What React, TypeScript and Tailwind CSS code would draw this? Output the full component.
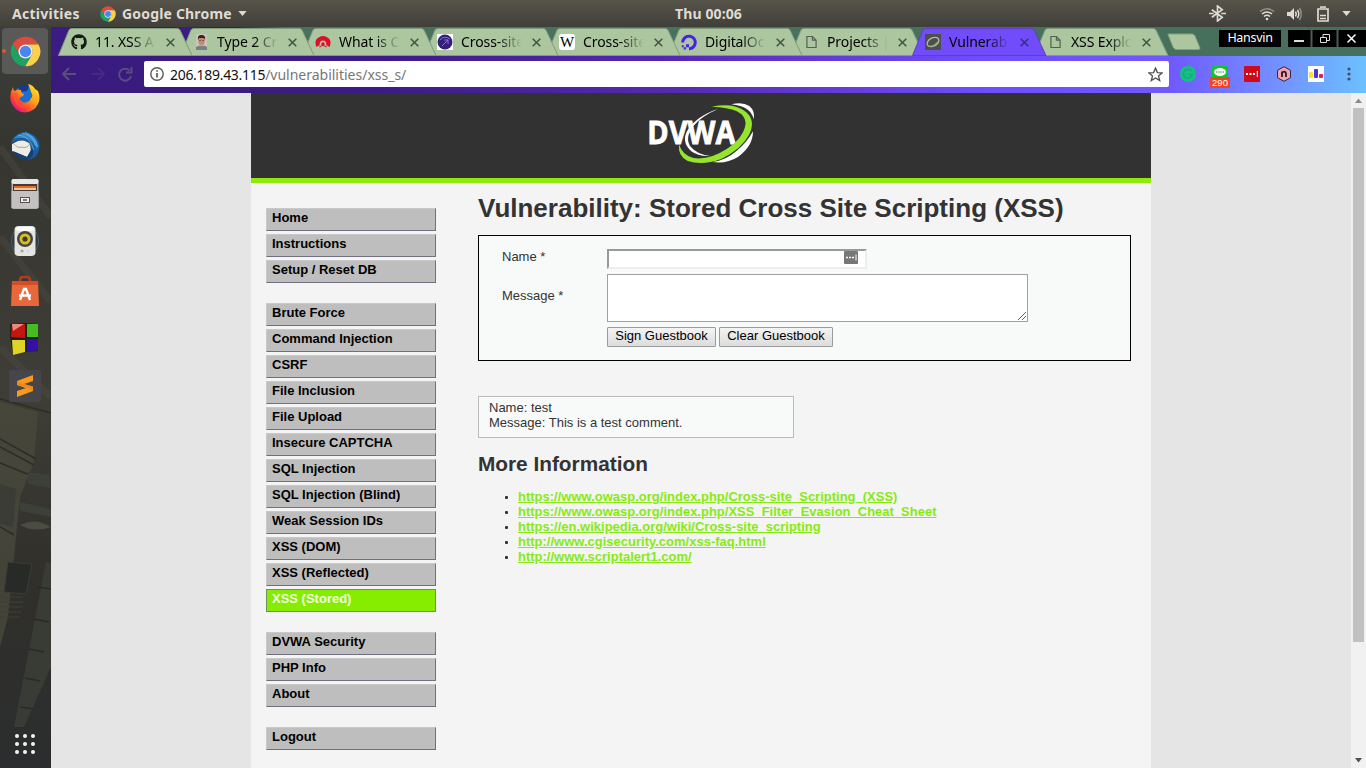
import type { ReactNode } from "react";
import { FaGithub, FaDigitalOcean } from "react-icons/fa";

function ChromeIcon({ className }: { className: string }) {
  return (
    <svg viewBox="0 0 48 48" className={className}>
      <path fill="#dd4b3e" d="M24 13L44.2 13A23 23 0 0 0 4.4 12L14.5 29.5A11 11 0 0 1 24 13Z" />
      <path fill="#fbd04b" d="M44.2 13H24A11 11 0 0 1 33.5 29.5L23.4 47A23 23 0 0 0 44.2 13Z" />
      <path fill="#1da261" d="M4.4 12L14.5 29.5A11 11 0 0 0 33.5 29.5L23.4 47A23 23 0 0 1 4.4 12Z" />
      <circle cx="24" cy="24" r="11" fill="#f3f3f3" />
      <circle cx="24" cy="24" r="8.8" fill="#4a86ee" />
    </svg>
  );
}

function FirefoxIcon() {
  return (
    <svg viewBox="0 0 30 30" className="size-[30px]">
      <defs>
        <linearGradient id="fx" x1="0.9" y1="0.1" x2="0.2" y2="0.9">
          <stop offset="0" stopColor="#ffe226" />
          <stop offset="0.45" stopColor="#ff9a1a" />
          <stop offset="0.8" stopColor="#ff3a3a" />
          <stop offset="1" stopColor="#e0188a" />
        </linearGradient>
      </defs>
      <circle cx="15" cy="14" r="11.5" fill="#1a6fd0" />
      <path d="M8 4Q14 0 19 3L17 8L10 9Z" fill="#17398f" />
      <path
        fill="url(#fx)"
        d="M3 4Q3 7 5 8Q8 6 11 7Q11 10 14 11Q14 13 11 14Q9 15 10 17Q13 21 17 19Q21 18 20 16Q24 14 21 9Q20 5 18 1Q23 2 25 6L28 8Q31 15 28 21Q24 29 15 29.500Q5 29 1 19Q-1 11 3 4Z"
      />
      <path d="M5 9Q2 16 6 21Q11 27 19 24Q12 25 8 19Q6 14 8 11Z" fill="#ff5722" opacity=".75" />
    </svg>
  );
}

function ThunderbirdIcon() {
  return (
    <svg viewBox="0 0 30 30" className="size-[30px]">
      <path d="M1 12Q4 2 15 1Q25 2 29 11Q31 20 25 26Q19 30 13 28Q24 22 19 11Q12 7 1 12Z" fill="#185e9e" />
      <path d="M3 8Q12 -1 23 5Q29 11 27 19Q24 9 15 7Q8 6 3 8Z" fill="#3487c8" />
      <path d="M12 2Q23 4 26 15M8 4Q20 5 24 19M15 1Q25 6 28 16" stroke="#77bdea" strokeWidth=".7" fill="none" />
      <path d="M2 13L8 10Q15 8 20 13L21 21L17 26L2 20Z" fill="#eeece7" />
      <path d="M3 12Q8 18 12 16Q16 18 20 13" stroke="#aaa69f" fill="none" />
      <path d="M3 20L17 26L22 17Q26 24 18 29Q8 30 3 20Z" fill="#163f76" />
    </svg>
  );
}

function FilesIcon() {
  return (
    <svg viewBox="0 0 30 32" className="h-[32px] w-[30px]">
      <rect x="1.500" y="1" width="27" height="30" rx="2" fill="#b4b4b2" />
      <rect x="1.500" y="1" width="27" height="5" rx="2" fill="#e7e6e4" />
      <rect x="3" y="6" width="24" height="7" fill="#463a33" />
      <rect x="4" y="8" width="22" height="2" fill="#e66b29" />
      <rect x="4" y="10" width="22" height="2" fill="#f3c69c" />
      <rect x="1.500" y="13" width="27" height="17" fill="#c3c2c0" />
      <rect x="10.500" y="19.500" width="9" height="5" fill="#eee" stroke="#555" />
      <path d="M13 22H17" stroke="#555" strokeWidth="1.500" />
    </svg>
  );
}

function RhythmboxIcon() {
  return (
    <svg viewBox="0 0 30 32" className="h-[32px] w-[30px]">
      <path d="M4 7Q-1 16 4 25M26 7Q31 16 26 25" stroke="#35637c" fill="none" />
      <rect x="4.500" y="1" width="21" height="30" rx="4" fill="#e4e4e2" />
      <rect x="6" y="2" width="18" height="4" rx="2" fill="#fafafa" />
      <circle cx="15" cy="14" r="8" fill="#44463c" />
      <circle cx="15" cy="14" r="5.500" fill="#d7bd27" />
      <circle cx="15" cy="14" r="2.600" fill="#3c3a2c" />
      <circle cx="12" cy="26" r="1.600" fill="#a6a6a6" />
      <circle cx="18" cy="26" r="1.600" fill="#d7d7d7" />
    </svg>
  );
}

function SoftwareIcon() {
  return (
    <svg viewBox="0 0 30 32" className="h-[32px] w-[30px]">
      <path d="M10 8V5Q10 2 13 2H17Q20 2 20 5V8" fill="none" stroke="#b53a1c" strokeWidth="2.500" />
      <path d="M2 6H28L29 31H1Z" fill="#e9683b" />
      <path d="M2 6H28L28.200 10H1.800Z" fill="#d44e25" />
      <path d="M10 25L14 14H16L20 25M9 20.500H21" fill="none" stroke="#fff" strokeWidth="2.300" />
    </svg>
  );
}

function BlocksIcon() {
  return (
    <svg viewBox="0 0 30 34" className="h-[34px] w-[30px]">
      <path d="M0 3L15 2L28 3V30L17 31L3 34L0 16Z" fill="#202020" />
      <path d="M2 3L15 3V17L1 16Z" fill="#c3160f" />
      <path d="M2 3H14L3 10Z" fill="#ed8a80" />
      <path d="M17 3L28 3V16H17Z" fill="#43bd20" />
      <path d="M2 19H15V31L3 34Z" fill="#ded326" />
      <path d="M17 18H28V29L17 31Z" fill="#3310a6" />
    </svg>
  );
}

function Dock() {
  return (
    <aside className="relative flex h-full w-[51px] shrink-0 flex-col items-center overflow-hidden bg-[#35342f] pr-px">
      <svg viewBox="0 0 51 741" className="absolute inset-0 h-full w-full">
        <defs>
          <linearGradient id="dock" x1="0" y1="0" x2="0" y2="1">
            <stop offset="0" stopColor="#3a3f3b" />
            <stop offset=".15" stopColor="#363631" />
            <stop offset=".5" stopColor="#3e3d36" />
            <stop offset=".75" stopColor="#302f2b" />
            <stop offset="1" stopColor="#2b2d2e" />
          </linearGradient>
        </defs>
        <rect width="51" height="741" fill="url(#dock)" />
        <path d="M0 120L51 190M0 210L51 275M0 320L51 370" stroke="#484740" strokeWidth="7" opacity=".5" />
        <path d="M0 375L38 385L34 435L20 470L8 590L0 620Z" fill="#48483c" opacity=".8" />
        <path d="M0 412L36 432M0 420L34 438M0 436L30 448M0 372L51 386M0 500L14 508" stroke="#2b2e28" strokeWidth="1.500" />
        <path d="M0 457L16 462L13 500L0 497Z" fill="#3a3c35" />
        <path d="M28 445L50 448V461L28 457Z M20 475L51 482V490L20 484Z" fill="#3d3f3a" />
        <path d="M20 498Q35 490 51 500Q35 506 20 498Z" fill="#55574f" opacity=".7" />
        <path d="M8 535L32 537L26 567L4 565Z" fill="#282a27" stroke="#3b3c37" />
        <path d="M0 570H23M0 575H23M0 580H22M0 585H21M0 590H20" stroke="#41413a" />
        <path d="M46 535L51 536V640L24 700H14Z" fill="#3c3e38" opacity=".8" />
        <path d="M38 560L51 562M34 592L49 595M29 622L44 625M25 651L40 654M20 680L34 682" stroke="#292a27" strokeWidth="1.500" />
      </svg>
      <div className="relative mt-px flex h-[46px] w-[46px] items-center justify-center rounded bg-[#595a58]">
        <ChromeIcon className="size-[31px]" />
        <span className="absolute -left-[0px] top-[21px] size-1 rounded-full bg-[#e85125]" />
      </div>
      <div className="relative mt-[9px] flex flex-col items-center">
        <FirefoxIcon />
        <div className="mt-[18px]"><ThunderbirdIcon /></div>
        <div className="mt-[17px]"><FilesIcon /></div>
        <div className="mt-[15px]"><RhythmboxIcon /></div>
        <div className="mt-[18px]"><SoftwareIcon /></div>
        <div className="mt-[14px]"><BlocksIcon /></div>
        <div className="mt-[15px] flex size-8 items-center justify-center rounded-[2px] bg-[#46464a]">
          <svg viewBox="0 0 18 22" className="h-[22px] w-[18px]">
            <path d="M1 6L17 0V6L8 9L17 12V16L1 22V16L10 13L1 10Z" fill="#f99a1c" />
            <path d="M1 6V10L10 13L17 15.500V11.500L8 9Z" fill="#ee8b1a" />
          </svg>
        </div>
      </div>
      <div className="relative mb-[14px] mt-auto grid grid-cols-3 gap-1">
        {Array.from({ length: 9 }, (_, i) => (
          <span key={i} className="size-1 rounded-full bg-[#f4f4f4]" />
        ))}
      </div>
    </aside>
  );
}

function TopBar() {
  return (
    <header className="grid h-[27px] shrink-0 grid-cols-[1fr_auto_1fr] items-center bg-linear-to-b from-[#57544a] to-[#403f3a] font-['Noto_Sans',sans-serif] text-[14px] font-bold text-[#dfdbd2]">
      <div className="flex items-center pl-3">
        <span className="w-[68px] tracking-[0.27px]">Activities</span>
        <ChromeIcon className="ml-5 size-4" />
        <span className="ml-[6px] tracking-[0.18px]">Google Chrome</span>
        <svg viewBox="0 0 10 6" className="ml-[6px] h-[5px] w-[9px]"><path d="M0 0H10L5 6Z" fill="currentColor" /></svg>
      </div>
      <span className="pl-[51px] tracking-[0.1px]">Thu 00:06</span>
      <div className="flex items-center justify-end pr-[15px]">
        <svg viewBox="0 0 18 18" className="mr-[33px] size-[17px]" fill="none" stroke="currentColor" strokeWidth="1.800">
          <path d="M3 5L14 13L9 17V1L14 5L3 13M0 9H5M13 9H18" />
        </svg>
        <svg viewBox="0 0 16 14" className="mr-[12px] h-[14px] w-4" fill="none" stroke="currentColor" strokeWidth="1.600">
          <path d="M1 4.500Q8 -1 15 4.500" opacity=".45" />
          <path d="M3 7Q8 3 13 7M5 9.500Q8 7 11 9.500" />
          <circle cx="8" cy="12" r="1.300" fill="currentColor" stroke="none" />
        </svg>
        <svg viewBox="0 0 16 14" className="mr-[14px] h-[14px] w-4" fill="none" stroke="currentColor" strokeWidth="1.500">
          <path d="M0 5H3L7 1V13L3 9H0Z" fill="currentColor" stroke="none" />
          <path d="M8.500 4.500Q10 7 8.500 9.500M10.500 3Q13 7 10.500 11" />
          <path d="M12.500 1Q16 7 12.500 13" opacity=".45" />
        </svg>
        <svg viewBox="0 0 12 16" className="mr-[13px] h-4 w-3" fill="none" stroke="currentColor" strokeWidth="1.700">
          <path d="M4 2V1H8V2M1 3H11V15H1ZM3 9.500H9M3 12.500H9" />
        </svg>
        <svg viewBox="0 0 10 6" className="h-[5px] w-[9px]"><path d="M0 0H10L5 6Z" fill="currentColor" /></svg>
      </div>
    </header>
  );
}

const PageIcon = () => (
  <svg viewBox="0 0 12 14" className="ml-[3px] h-[14px] w-[11px]" fill="none" stroke="#555f50" strokeWidth="1.300">
    <path d="M1 1H7L11 5V13H1ZM7 1V5H11" />
  </svg>
);

type TabInfo = { title: string; icon: ReactNode; z: string; active?: boolean };

const tabs: TabInfo[] = [
  { title: "11. XSS At", z: "z-[9]", icon: <FaGithub className="size-4 text-[#161c16]" /> },
  {
    title: "Type 2 Cro", z: "z-[8]",
    icon: (
      <svg viewBox="0 0 11 16" className="ml-[3px] h-4 w-[11px]">
        <rect width="11" height="16" fill="#c9c4bc" />
        <path d="M0 16V13Q3 11 5.500 12Q9 11 11 13V16Z" fill="#77808a" />
        <ellipse cx="5.500" cy="7" rx="3.200" ry="4.500" fill="#c08c74" />
        <path d="M2 6Q1 1 5.500 1Q10 1 9 6L8 4H3Z" fill="#33241e" />
        <path d="M3 6.500H5M6 6.500H8" stroke="#6d4a3c" strokeWidth=".8" />
      </svg>
    ),
  },
  {
    title: "What is C", z: "z-[7]",
    icon: (
      <svg viewBox="0 0 16 14" className="h-[14px] w-4">
        <path d="M1.500 12Q-1.500 5 4 2.200Q8 0 12 2.200Q17.500 5 14.500 12L11.200 10Q12 5.800 8 5.500Q4 5.800 4.800 10Z" fill="#db1029" />
        <circle cx="8" cy="9" r="1.700" fill="#db1029" />
        <path d="M4.500 12Q8 9 11.500 12" stroke="#db1029" strokeWidth="1.200" fill="none" />
      </svg>
    ),
  },
  {
    title: "Cross-site", z: "z-[6]",
    icon: (
      <svg viewBox="0 0 16 16" className="size-4">
        <rect width="16" height="16" fill="#fff" />
        <circle cx="8" cy="8" r="7.500" fill="#34207a" />
        <path d="M3 6Q7 1 13 5M5 12L11 6M7 6H11V10" stroke="#8577cc" fill="none" />
      </svg>
    ),
  },
  {
    title: "Cross-site", z: "z-[5]",
    icon: (
      <span className="flex size-4 items-center justify-center rounded-[3px] bg-white font-['Liberation_Serif',serif] text-[15px] leading-none text-black">W</span>
    ),
  },
  { title: "DigitalOc", z: "z-[4]", icon: <FaDigitalOcean className="size-[17px] text-[#4420e8]" /> },
  { title: "Projects |", z: "z-[3]", icon: <PageIcon /> },
  {
    title: "Vulnerab", z: "z-10", active: true,
    icon: (
      <svg viewBox="0 0 16 16" className="size-4">
        <rect width="16" height="16" fill="#4c4f4c" />
        <ellipse cx="8" cy="8" rx="6.300" ry="4" transform="rotate(-28 8 8)" fill="none" stroke="#b5b7ad" strokeWidth="1.400" />
        <path d="M2.500 11Q7 14 12 8" stroke="#7e9b54" fill="none" />
      </svg>
    ),
  },
  { title: "XSS Explo", z: "z-[1]", icon: <PageIcon /> },
];

function Tab({ tab }: { tab: TabInfo }) {
  return (
    <div className={`relative flex h-7 w-[122px] shrink-0 items-center ${tab.z}`}>
      <svg viewBox="0 0 135 28" className="absolute left-0 top-0 h-7 w-[135px]">
        <path
          d="M0.500 27.500L11 2Q12 0.500 14 0.500H119Q121 0.500 122 2L134 27.500Z"
          fill={tab.active ? "#704cfa" : "#acc69f"}
          stroke={tab.active ? "#5c40c4" : "#7f9c7b"}
          strokeWidth="1"
        />
      </svg>
      <div className="relative ml-[13px] flex w-4 justify-start">{tab.icon}</div>
      <span className="relative ml-[8px] w-[66px] overflow-hidden whitespace-nowrap text-[14px] leading-5 tracking-[-0.1px] text-black mask-r-from-55% mask-r-to-92%">
        {tab.title}
      </span>
      <svg viewBox="0 0 9 9" className="relative ml-[5px] size-[9px]" stroke={tab.active ? "#343078" : "#465142"} strokeWidth="1.500">
        <path d="M.7 .7L8.300 8.300M8.300 .7L.7 8.300" />
      </svg>
    </div>
  );
}

function TabStrip() {
  return (
    <div className="flex h-[29px] items-start bg-[linear-gradient(90deg,#3b1c83_0,#3b1c83_190px,#49725e_235px,#47705c_100%)] pl-[7px] pt-px font-['Noto_Sans',sans-serif]">
      {tabs.map((t, i) => <Tab key={i} tab={t} />)}
      <svg viewBox="0 0 34 18" className="ml-[11px] mt-[5px] h-[18px] w-[34px] shrink-0">
        <path d="M1 1.500Q1 1 2 1H25Q27 1 28 3L33 15Q33 16.500 31 16.500H9Q7 16 6 14Z" fill="#acc69f" stroke="#83a17d" />
      </svg>
      <div className="ml-auto flex h-[19px] shrink-0 items-center pt-[2px]">
        <span className="mr-[7px] flex h-[17px] w-[62px] items-center justify-center bg-black text-[12.500px] tracking-[-0.3px] text-white">Hansvin</span>
        <div className="flex h-[17px] w-[78px] bg-black">
          <svg viewBox="0 0 78 17" className="h-[17px] w-[78px]" fill="none" stroke="#fff">
            <path d="M6 11H16" strokeWidth="2" stroke="#ddd" />
            <path d="M32.500 7.500H38.500V12.500H32.500ZM35 7V4.500H41.500V10.500H39" stroke="#ddd" />
            <path d="M59.500 4.500L67.500 12.500M67.500 4.500L59.500 12.500" strokeWidth="1.500" />
            <path d="M23.500 0V17M49.500 0V17" stroke="#4a5d52" strokeWidth="2" />
          </svg>
        </div>
      </div>
    </div>
  );
}

function Toolbar() {
  return (
    <div className="flex h-[37px] items-center bg-[linear-gradient(90deg,#391a7c_0%,#3c1b88_25%,#5729b5_48%,#6f4cfa_70%,#7058ff_85%,#7388ff_92%,#6cc0ff_100%)] pb-px font-['Noto_Sans',sans-serif]">
      <svg viewBox="0 0 93 26" className="h-[26px] w-[93px] shrink-0" fill="none" strokeWidth="2">
        <path d="M25 13H12.500M18 7L12 13L18 19" stroke="#5b4c7e" />
        <path d="M41 13H53M47 7L53 13L47 19" stroke="#452a83" />
        <path d="M78.500 9.500A6 6 0 1 0 80 15M80.500 6V11.500H75" stroke="#5b4c7e" />
      </svg>
      <div className="flex h-[26px] w-[1025px] shrink-0 items-center rounded-[2px] bg-white pl-[6px] pr-[6px] text-[14px] text-[#111]">
        <svg viewBox="0 0 14 14" className="size-[14px]" fill="none" stroke="#5a5a5a" strokeWidth="1.400">
          <circle cx="7" cy="7" r="6.200" />
          <path d="M7 6V10.500M7 3.200V4.800" strokeWidth="1.700" />
        </svg>
        <span className="ml-[6px] tracking-[-0.3px]">206.189.43.115</span>
        <span className="tracking-[-0.01px] text-[#777]">/vulnerabilities/xss_s/</span>
        <svg viewBox="0 0 16 16" className="ml-auto size-[15px]" fill="none" stroke="#505050" strokeWidth="1.400">
          <path d="M8 1.200L10 6L15 6.300L11.200 9.500L12.500 14.500L8 11.700L3.500 14.500L4.800 9.500L1 6.300L6 6Z" />
        </svg>
      </div>
      <svg viewBox="0 0 16 16" className="ml-[11px] size-4 shrink-0">
        <circle cx="8" cy="8" r="8" fill="#12c37c" />
        <path d="M11.500 5A4.500 4.500 0 1 0 12 9.500V8.500H8.500" fill="none" stroke="#1aa58a" strokeWidth="1.500" />
      </svg>
      <div className="ml-[14px] flex w-5 shrink-0 flex-col items-center pt-[6px]">
        <svg viewBox="0 0 16 11" className="h-[11px] w-4">
          <path d="M0 2Q0 0 2 0H14Q16 0 16 2V11H0Z" fill="#12c42c" />
          <ellipse cx="8" cy="6" rx="6" ry="4" fill="#fff" />
          <path d="M4 6H12" stroke="#5ac965" strokeWidth="1.500" strokeDasharray="1.500 .7" />
        </svg>
        <span className="flex h-[11px] w-5 items-center justify-center rounded-[1px] bg-[#f54322] font-['Liberation_Sans',sans-serif] text-[9.500px] leading-none text-white">290</span>
      </div>
      <svg viewBox="0 0 16 16" className="ml-[14px] size-4 shrink-0">
        <rect width="16" height="16" rx="1" fill="#d0091b" />
        <path d="M2 8H4M5.500 8H7.500M9 8H11" stroke="#fff" strokeWidth="2" />
        <path d="M13.300 5V11" stroke="#fff" />
      </svg>
      <svg viewBox="0 0 16 16" className="ml-4 size-4 shrink-0">
        <path d="M8 .7L14.500 4.300V11.700L8 15.300L1.500 11.700V4.300Z" fill="#f5a2ac" stroke="#34234c" />
        <path d="M6 11V5.500M6 7Q7 5.500 8.500 5.700Q10 6 10 8V11" fill="none" stroke="#251b2b" strokeWidth="1.800" />
      </svg>
      <svg viewBox="0 0 16 16" className="ml-4 size-4 shrink-0">
        <rect width="16" height="16" fill="#fff" />
        <rect x="1" y="6" width="4" height="6" rx="1" fill="#f2e62b" />
        <rect x="6" y="3" width="4" height="9" rx="1" fill="#5030dc" />
        <rect x="11" y="8" width="4" height="4" rx="1" fill="#e71f4d" />
      </svg>
      <svg viewBox="0 0 4 14" className="ml-[23px] h-[14px] w-1 shrink-0" fill="#414e6b">
        <circle cx="2" cy="2" r="1.600" /><circle cx="2" cy="7" r="1.600" /><circle cx="2" cy="12" r="1.600" />
      </svg>
    </div>
  );
}

function DvwaLogo() {
  return (
    <svg viewBox="33 21 360 210" className="h-[70px] w-[120px]">
      <path d="M264 57Q200 78 173 120Q152 155 184 184Q205 200 240 198Q200 192 182 170Q163 145 190 108Q215 78 264 57Z" fill="#fff" />
      <text x="52" y="163" textLength="264" lengthAdjust="spacingAndGlyphs" fontFamily="Open Sans, sans-serif" fontSize="98" fontWeight="700" fill="#fff" stroke="#fff" strokeWidth="2.500">DVWA</text>
      <path d="M245 50Q310 38 344 63Q379 88 358 133Q335 178 275 206Q218 228 173 213Q143 199 147 163Q157 196 190 204Q238 211 290 177Q343 142 347 99Q345 53 245 50Z" fill="#96e52d" />
      <path d="M304 43Q337 34 358 48Q376 63 371 88Q363 49 304 43Z" fill="#fff" />
      <path d="M369 124Q369 168 325 200Q290 222 248 216Q289 211 322 181Q350 158 369 124Z" fill="#fff" />
    </svg>
  );
}

const menu = [
  ["Home", "Instructions", "Setup / Reset DB"],
  ["Brute Force", "Command Injection", "CSRF", "File Inclusion", "File Upload", "Insecure CAPTCHA", "SQL Injection", "SQL Injection (Blind)", "Weak Session IDs", "XSS (DOM)", "XSS (Reflected)", "XSS (Stored)"],
  ["DVWA Security", "PHP Info", "About"],
  ["Logout"],
];

const links = [
  "https://www.owasp.org/index.php/Cross-site_Scripting_(XSS)",
  "https://www.owasp.org/index.php/XSS_Filter_Evasion_Cheat_Sheet",
  "https://en.wikipedia.org/wiki/Cross-site_scripting",
  "http://www.cgisecurity.com/xss-faq.html",
  "http://www.scriptalert1.com/",
];

const buttonClass =
  "h-5 rounded-[1px] border border-[#9b9b9b] bg-linear-to-b from-[#f4f4f4] to-[#dcdcdc] pb-[2px] text-center text-[13px] leading-[16px] text-black";

function DvwaPage() {
  return (
    <div className="flex h-full w-[900px] flex-col bg-[#f4f4f4] font-['Liberation_Sans',Arial,sans-serif] text-[13px] leading-[15px] text-[#333]">
      <div className="flex h-[90px] shrink-0 justify-center border-b-[5px] border-[#90e80c] bg-[#323232] pt-1">
        <DvwaLogo />
      </div>
      <div className="flex min-h-0 flex-1">
        <nav className="ml-[15px] mt-[25px] flex w-[170px] shrink-0 flex-col gap-5">
          {menu.map((group, g) => (
            <ul key={g} className="flex flex-col gap-[3px]">
              {group.map((item) => (
                <li
                  key={item}
                  className={`h-[23px] border pl-[5px] pt-[1px] font-bold ${
                    item === "XSS (Stored)"
                      ? "border-[#6f8f5c] bg-[#87ed00] text-[#f4ffe4]"
                      : "border-b-[#706f80] border-l-[#c9c9c9] border-r-[#706f80] border-t-[#c9c9c9] bg-[#bebebe] text-black"
                  }`}
                >
                  {item}
                </li>
              ))}
            </ul>
          ))}
        </nav>
        <main className="ml-[42px] w-[653px] shrink-0 pt-[10px]">
          <h1 className="whitespace-nowrap text-[26px] font-bold leading-[30px]">Vulnerability: Stored Cross Site Scripting (XSS)</h1>
          <div className="mt-3 h-[126px] border border-black bg-[#f8fafa] pl-[23px] pt-[13px]">
            <div className="flex h-5">
              <span className="w-[105px] shrink-0">Name *</span>
              <div className="flex h-5 w-[260px] justify-end border-2 border-b-[#eee] border-l-[#999] border-r-[#eee] border-t-[#999] bg-white pr-[7px]">
                <svg viewBox="0 0 14 13" className="h-[13px] w-[14px]">
                  <rect width="14" height="13" rx="1" fill="#777" />
                  <path d="M2 6.500H4M5 6.500H7M8 6.500H10" stroke="#fff" strokeWidth="1.600" />
                  <path d="M12 3.500V9.500" stroke="#fff" />
                </svg>
              </div>
            </div>
            <div className="mt-[5px] flex h-12">
              <span className="w-[105px] shrink-0 pt-[14px]">Message *</span>
              <div className="flex h-12 w-[421px] items-end justify-end border border-[#a0a0a0] bg-white p-px">
                <svg viewBox="0 0 8 8" className="size-2" stroke="#666"><path d="M0 8L8 0M4 8L8 4" /></svg>
              </div>
            </div>
            <div className="ml-[105px] mt-[5px] flex gap-[3px]">
              <button className={`w-[109px] ${buttonClass}`}>Sign Guestbook</button>
              <button className={`w-[114px] ${buttonClass}`}>Clear Guestbook</button>
            </div>
          </div>
          <div className="mt-[35px] h-[42px] w-[316px] border border-[#bbb] bg-[#f8fafa] pl-[10px] pt-[3px]">
            Name: test
            <br />
            Message: This is a test comment.
          </div>
          <h2 className="mt-[14px] text-[20.800px] font-bold leading-6">More Information</h2>
          <ul className="mt-[13px] pl-[27px]">
            {links.map((l) => (
              <li key={l} className="flex items-center gap-[10px]">
                <span className="mt-px size-[3px] rounded-[1px] bg-[#333]" />
                <a className="font-bold text-[#87ea12] underline">{l}</a>
              </li>
            ))}
          </ul>
        </main>
      </div>
    </div>
  );
}

export default function App() {
  return (
    <div className="flex h-[768px] w-[1366px] flex-col overflow-hidden">
      <TopBar />
      <div className="flex min-h-0 flex-1">
        <Dock />
        <div className="flex min-w-0 flex-1 flex-col">
          <TabStrip />
          <Toolbar />
          <div className="flex min-h-0 flex-1 bg-[#e5e5e5]">
            <div className="flex flex-1 justify-center"><DvwaPage /></div>
            <div className="flex w-[15px] flex-col items-center bg-[#f1f1f1]">
              <svg viewBox="0 0 15 15" className="size-[15px]"><path d="M4 10L7.500 5.500L11 10Z" fill="#8b8b8b" /></svg>
              <div className="h-[534px] w-[11px] bg-[#c1c1c1]" />
              <svg viewBox="0 0 15 15" className="mt-auto size-[15px]"><path d="M4 5L7.500 9.500L11 5Z" fill="#505050" /></svg>
            </div>
          </div>
        </div>
      </div>
    </div>
  );
}
